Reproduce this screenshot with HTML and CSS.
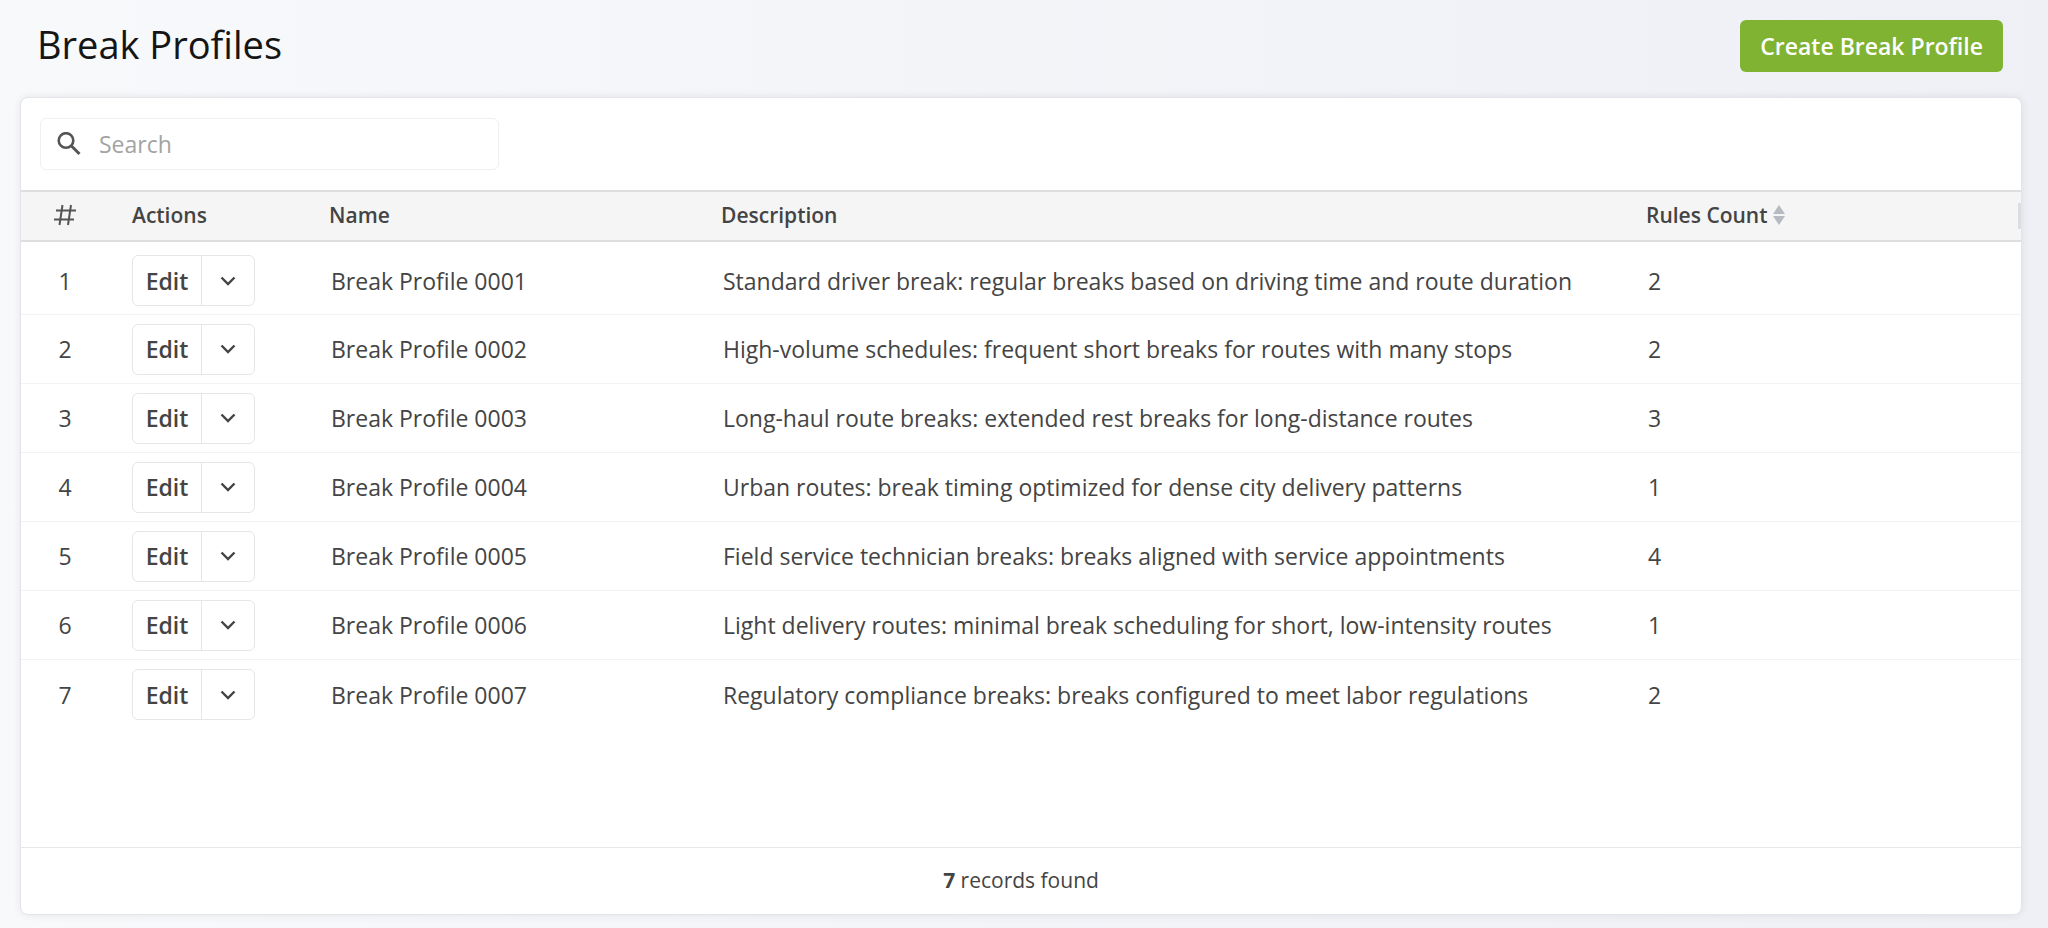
FILE: index.html
```
<!DOCTYPE html>
<html lang="en">

<head>
    <meta charset="UTF-8">
    <meta name="viewport" content="width=device-width, initial-scale=1.0">
    <title>Break Profiles</title>
    <link rel="stylesheet" href="styles.css">
</head>

<body>
    <!-- Icons used more than once -->
    <svg class="sprite" aria-hidden="true">
        <symbol id="chevron" viewBox="0 0 16 10">
            <path d="M1.500 1.500 8 8l6.500-6.500" fill="none" stroke="currentColor" stroke-width="2.400" />
        </symbol>
    </svg>

    <header class="page-header">
        <h1>Break Profiles</h1>
        <button type="button" class="create">Create Break Profile</button>
    </header>

    <main class="card">
        <div class="toolbar">
            <div class="search">
                <svg viewBox="0 0 24 24" aria-hidden="true">
                    <circle cx="9" cy="8.500" r="7.300" fill="none" stroke="currentColor" stroke-width="2.600" />
                    <path d="M14.500 14l8 8" fill="none" stroke="currentColor" stroke-width="3" />
                </svg>
                <input type="text" placeholder="Search" aria-label="Search">
            </div>
        </div>

        <table>
            <colgroup>
                <col class="col-num">
                <col class="col-actions">
                <col class="col-name">
                <col class="col-description">
                <col class="col-rules">
            </colgroup>
            <thead>
                <tr>
                    <th class="num">
                        <svg class="hash" viewBox="0 0 22 22" role="img" aria-label="Number">
                            <path d="M8.500 1 5.500 21M17 1l-3 20M2 6.500h20M0 15.500h20" fill="none" stroke="currentColor" stroke-width="2" />
                        </svg>
                    </th>
                    <th>Actions</th>
                    <th>Name</th>
                    <th>Description</th>
                    <th class="last">
                        <span class="sortable">Rules Count
                            <svg class="sort" viewBox="0 0 12 20" aria-hidden="true">
                                <path d="M6 0l6 9H0zM0 11h12l-6 9z" fill="currentColor" />
                            </svg>
                        </span>
                    </th>
                </tr>
            </thead>
            <tbody>
                <tr>
                    <td class="num">1</td>
                    <td class="actions"><div class="split"><button type="button" class="edit">Edit</button><button type="button" class="more" aria-label="More actions"><svg><use href="#chevron" /></svg></button></div></td>
                    <td>Break Profile 0001</td>
                    <td>Standard driver break: regular breaks based on driving time and route duration</td>
                    <td>2</td>
                </tr>
                <tr>
                    <td class="num">2</td>
                    <td class="actions"><div class="split"><button type="button" class="edit">Edit</button><button type="button" class="more" aria-label="More actions"><svg><use href="#chevron" /></svg></button></div></td>
                    <td>Break Profile 0002</td>
                    <td>High-volume schedules: frequent short breaks for routes with many stops</td>
                    <td>2</td>
                </tr>
                <tr>
                    <td class="num">3</td>
                    <td class="actions"><div class="split"><button type="button" class="edit">Edit</button><button type="button" class="more" aria-label="More actions"><svg><use href="#chevron" /></svg></button></div></td>
                    <td>Break Profile 0003</td>
                    <td>Long-haul route breaks: extended rest breaks for long-distance routes</td>
                    <td>3</td>
                </tr>
                <tr>
                    <td class="num">4</td>
                    <td class="actions"><div class="split"><button type="button" class="edit">Edit</button><button type="button" class="more" aria-label="More actions"><svg><use href="#chevron" /></svg></button></div></td>
                    <td>Break Profile 0004</td>
                    <td>Urban routes: break timing optimized for dense city delivery patterns</td>
                    <td>1</td>
                </tr>
                <tr>
                    <td class="num">5</td>
                    <td class="actions"><div class="split"><button type="button" class="edit">Edit</button><button type="button" class="more" aria-label="More actions"><svg><use href="#chevron" /></svg></button></div></td>
                    <td>Break Profile 0005</td>
                    <td>Field service technician breaks: breaks aligned with service appointments</td>
                    <td>4</td>
                </tr>
                <tr>
                    <td class="num">6</td>
                    <td class="actions"><div class="split"><button type="button" class="edit">Edit</button><button type="button" class="more" aria-label="More actions"><svg><use href="#chevron" /></svg></button></div></td>
                    <td>Break Profile 0006</td>
                    <td>Light delivery routes: minimal break scheduling for short, low-intensity routes</td>
                    <td>1</td>
                </tr>
                <tr>
                    <td class="num">7</td>
                    <td class="actions"><div class="split"><button type="button" class="edit">Edit</button><button type="button" class="more" aria-label="More actions"><svg><use href="#chevron" /></svg></button></div></td>
                    <td>Break Profile 0007</td>
                    <td>Regulatory compliance breaks: breaks configured to meet labor regulations</td>
                    <td>2</td>
                </tr>
            </tbody>
        </table>

        <footer class="records"><strong>7</strong> records found</footer>
    </main>
</body>

</html>
```
FILE: styles.css
```
* {
    box-sizing: border-box;
}

body {
    display: flex;
    flex-direction: column;
    min-height: 100vh;
    margin: 0;
    padding: 0 26px 13px 20px;
    background: linear-gradient(90deg, #f8f9fb 0%, #f3f4f8 50%, #eff0f6 100%);
    color: #444444;
    font-family: "Open Sans", sans-serif;
    font-size: 23px;
    line-height: 32px;
}

button,
input {
    font: inherit;
    color: inherit;
}

.sprite {
    position: absolute;
    width: 0;
    height: 0;
}

.page-header {
    display: flex;
    justify-content: space-between;
    align-items: flex-start;
    height: 97px;
    padding: 20px 19px 0 17px;
}

h1 {
    margin: 0;
    color: #151515;
    font-size: 38px;
    font-weight: 400;
    line-height: 48px;
}

.create {
    height: 52px;
    padding: 0 20px;
    border: 0;
    border-radius: 6px;
    background-color: #80b332;
    color: #ffffff;
    font-weight: 600;
}

.card {
    display: flex;
    flex-direction: column;
    flex: 1;
    border: 1px solid #e4e5e8;
    border-radius: 8px;
    background-color: #ffffff;
    box-shadow: 0 0 8px rgba(0, 0, 0, 0.08);
}

.toolbar {
    padding: 20px 19px;
}

.search {
    display: flex;
    align-items: center;
    gap: 18px;
    width: 459px;
    height: 52px;
    padding: 0 16px;
    border: 1px solid #f0f0f0;
    border-radius: 6px;
}

.search svg {
    flex: none;
    width: 24px;
    height: 24px;
    color: #555555;
}

.search input {
    flex: 1;
    min-width: 0;
    padding: 0;
    border: 0;
    outline: 0;
    background: none;
}

.search input::placeholder {
    color: #a3a3a3;
}

table {
    width: 100%;
    table-layout: fixed;
    border-collapse: separate;
    border-spacing: 0;
}

.col-num {
    width: 88px;
}

.col-actions {
    width: 197px;
}

.col-name {
    width: 392px;
}

.col-rules {
    width: 398px;
}

th,
td {
    padding: 0 0 0 23px;
    text-align: left;
}

th {
    height: 52px;
    padding-bottom: 2px;
    border-top: 2px solid #dedede;
    border-bottom: 2px solid #dedede;
    background-color: #f5f5f5;
    font-size: 21px;
    font-weight: 600;
}

td {
    height: 69px;
    padding-left: 25px;
    border-bottom: 1px solid #f3f3f3;
}

td.actions {
    padding-left: 23px;
}

tbody tr:first-child td {
    padding-top: 5px;
    height: 73px;
}

tbody tr:last-child td {
    border-bottom: 0;
}

th.num,
td.num {
    padding-left: 0;
    text-align: center;
}

.hash {
    display: block;
    width: 22px;
    height: 22px;
    margin: 0 auto;
    color: #555555;
}

.sortable {
    display: flex;
    align-items: center;
    gap: 5px;
}

.sort {
    width: 12px;
    height: 20px;
    color: #b6bbc2;
}

/* column resize handle */
th.last {
    background-image: linear-gradient(#dcdde0, #dcdde0);
    background-position: right center;
    background-repeat: no-repeat;
    background-size: 3px 26px;
}

.split {
    display: flex;
    width: 123px;
    height: 51px;
    border: 1px solid #e6e6e6;
    border-radius: 6px;
}

.split button {
    padding: 0;
    border: 0;
    background: none;
}

.edit {
    width: 68px;
    font-weight: 600;
}

.split .more {
    display: flex;
    flex: 1;
    align-items: center;
    justify-content: center;
    border-left: 1px solid #e6e6e6;
}

.more svg {
    width: 16px;
    height: 10px;
}

.records {
    margin-top: auto;
    padding: 17px 0 19px;
    border-top: 1px solid #e8e8e8;
    font-size: 21px;
    line-height: 30px;
    text-align: center;
}
```
